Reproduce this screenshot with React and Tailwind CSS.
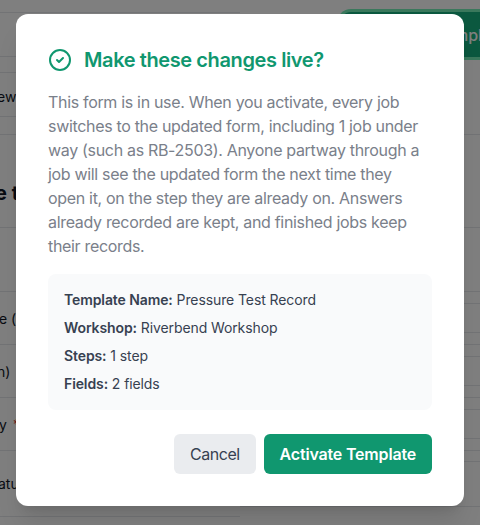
import React from "react";
import { CircleCheck } from "lucide-react";

const leftRows = [
  { h: "h-[13px]" },
  { h: "h-[44px]" },
  { h: "h-[16px]" },
  { h: "h-[44px] pt-[4px]", t: "ew", c: "-ml-[3px] text-[14px]" },
  { h: "h-[18px]" },
  { h: "h-[93px] pt-[23px]", t: "e to", c: "-ml-[5px] text-[20px] font-bold" },
  { h: "h-[64px]" },
  { h: "h-[53px]", t: "e (l", c: "-ml-[1px] text-[14px]" },
  { h: "h-[53px] gap-[7px]", t: "h)", c: "-ml-[3px] text-[14px]", star: true },
  { h: "h-[53px] gap-[6px]", t: "y", c: "-ml-[1px] text-[14px]", star: true },
  { h: "h-[66px]", t: "atu", c: "-ml-[2px] text-[14px]" },
];
const rightRows = ["h-[93px]", "h-[64px]", "h-[12px]", "h-[29px]", "h-[12px]", "h-[12px]", "h-[29px]", "h-[12px]", "h-[12px]", "h-[29px]", "h-[12px]", "h-[11px]", "h-[45px]"];

export default function App() {
  return (
    <div className="relative h-[525px] w-[480px] overflow-hidden bg-white font-['Inter',sans-serif]">
      <div className="flex h-full text-[#111827]">
        <div className="flex w-[240px] flex-col">
          {leftRows.map((r, i) => (
            <div key={i} className={`${r.h} flex shrink-0 items-center border-b border-[#e5e7eb]`}>
              {r.t && <span className={r.c}>{r.t}</span>}
              {r.star && <span className="text-[14px] text-[#dc2626]">*</span>}
            </div>
          ))}
        </div>
        <div className="flex flex-1 flex-col">
          <div className="flex h-[135px] shrink-0 flex-col items-end border-b border-[#e5e7eb] pt-[9px]">
            <div className="flex h-[51px] w-[143px] items-center rounded-l-[14px] border-y-[3px] border-l-[3px] border-[#74f0b8] bg-[#16b07f] pl-[114px] text-[16px] font-medium whitespace-nowrap text-white">mpl</div>
          </div>
          {rightRows.map((h, i) => (
            <div key={i} className={`${h} shrink-0 border-b border-[#e5e7eb]`} />
          ))}
        </div>
      </div>
      <div className="absolute inset-0 flex items-start justify-center bg-black/50 pt-[14px]">
        <div className="w-[448px] rounded-[12px] bg-white p-8 shadow-xl">
          <div className="flex items-center gap-3">
            <CircleCheck className="h-6 w-6 text-[#10976f]" strokeWidth={2} />
            <h2 className="text-[20px] leading-[28px] font-semibold tracking-[-0.4px] text-[#10976f]">Make these changes live?</h2>
          </div>
          <p className="mt-4 text-[16px] leading-[24px] tracking-[-0.32px] text-[#7a808a]">
            This form is in use. When you activate, every job switches to the updated form, including 1 job under way (such as RB-2503). Anyone partway through a job will see the updated form the next time they open it, on the step they are already on. Answers already recorded are kept, and finished jobs keep their records.
          </p>
          <div className="mt-4 flex flex-col gap-2 rounded-[8px] bg-[#f9fafb] p-4 text-[14px] leading-[20px] tracking-[-0.1px] text-[#374151]">
            <div><span className="font-semibold">Template Name:</span> Pressure Test Record</div>
            <div><span className="font-semibold">Workshop:</span> Riverbend Workshop</div>
            <div><span className="font-semibold">Steps:</span> 1 step</div>
            <div><span className="font-semibold">Fields:</span> 2 fields</div>
          </div>
          <div className="mt-6 flex justify-end gap-2">
            <button className="h-[40px] rounded-[6px] bg-[#eaecef] px-4 text-[16px] tracking-[-0.5px] text-[#374151]">Cancel</button>
            <button className="h-[40px] rounded-[6px] bg-[#10976f] px-4 text-[16px] font-semibold tracking-[-0.18px] text-white">Activate Template</button>
          </div>
        </div>
      </div>
    </div>
  );
}
